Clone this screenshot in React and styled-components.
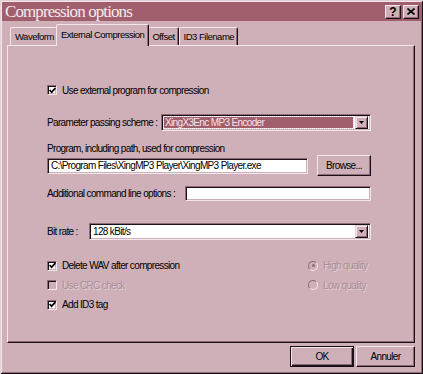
import styled, { createGlobalStyle } from 'styled-components'

const FACE = '#cfb0b9'
const LIGHT = '#f3e7eb'
const SOFT = '#e3d0d6'
const SHADOW = '#8f6a78'
const DARK = '#1c0f15'
const MAUVE = '#a15f6e'

const GlobalStyle = createGlobalStyle`
  html, body { margin: 0; padding: 0; background: ${FACE}; }
  body {
    font-family: 'Liberation Sans', Arial, sans-serif;
    font-size: 10px;
    letter-spacing: -0.65px;
    color: #000;
  }
`

const Window = styled.div`
  width: 423px;
  height: 374px;
  box-sizing: border-box;
  padding: 2px 2px 0;
  background: ${FACE};
  box-shadow: inset 1px 1px ${SOFT}, inset -1px -1px ${DARK}, inset 2px 2px ${LIGHT}, inset -2px -2px ${SHADOW};
  display: flex;
  flex-direction: column;
`

const TitleBar = styled.div`
  height: 19px;
  background: ${MAUVE};
  display: flex;
  align-items: center;
  padding: 0 2px 0 3px;
`

const Title = styled.span`
  flex: 1;
  font-family: 'Liberation Serif', 'Times New Roman', serif;
  font-size: 17px;
  letter-spacing: -0.9px;
  color: #f6e9ed;
  line-height: 19px;
`

const CaptionButton = styled.button`
  width: 16px;
  height: 14px;
  margin-left: ${p => p.$gap || 0}px;
  padding: 0;
  background: ${FACE};
  border: 1px solid;
  border-color: ${LIGHT} ${DARK} ${DARK} ${LIGHT};
  box-shadow: inset -1px -1px ${SHADOW};
  display: flex;
  align-items: center;
  justify-content: center;
  font-family: 'Liberation Sans', Arial, sans-serif;
  font-weight: bold;
  font-size: 12px;
  letter-spacing: 0;
  line-height: 1;
  color: #000;
`

const TabStrip = styled.div`
  height: 21px;
  margin: 3px 0 0 5px;
  padding-left: 3px;
  display: flex;
  align-items: flex-end;
  font-size: 9.5px;
  letter-spacing: -0.5px;
`

const Tab = styled.div`
  position: relative;
  z-index: ${p => (p.$active ? 2 : 1)};
  height: ${p => (p.$active ? 22 : 18)}px;
  margin: 0 ${p => (p.$active ? -2 : 0)}px ${p => (p.$active ? -1 : 0)}px;
  padding: ${p => (p.$active ? '0 4px 2px' : '0 3px 0 4px')};
  box-sizing: border-box;
  background: ${FACE};
  border-top: 1px solid ${LIGHT};
  border-left: 1px solid ${LIGHT};
  border-right: 1px solid ${DARK};
  box-shadow: inset -1px 0 ${SHADOW};
  border-radius: 2px 2px 0 0;
  display: flex;
  align-items: center;
  white-space: nowrap;
`

const Panel = styled.div`
  width: 408px;
  height: 298px;
  margin-left: 5px;
  box-sizing: border-box;
  border: 1px solid;
  border-color: ${LIGHT} ${DARK} ${DARK} ${LIGHT};
  box-shadow: inset -1px -1px ${SHADOW};
  padding-left: 39px;
  display: flex;
  flex-direction: column;
`

const Row = styled.div`
  width: 324px;
  height: ${p => p.$h}px;
  margin-top: ${p => p.$top}px;
  display: flex;
  align-items: center;
  white-space: nowrap;
`

const Label = styled.span`
  width: ${p => (p.$w ? `${p.$w}px` : 'auto')};
  flex-shrink: 0;
`

const Sunken = styled.div`
  width: ${p => p.$w}px;
  height: ${p => p.$h}px;
  box-sizing: border-box;
  background: #fff;
  border: 1px solid;
  border-color: ${SHADOW} ${LIGHT} ${LIGHT} ${SHADOW};
  box-shadow: inset 1px 1px ${DARK}, inset -1px -1px ${FACE};
  padding: 0 3px;
  display: flex;
  align-items: center;
  overflow: hidden;
`

const SelectField = styled(Sunken)`
  padding: 0 2px 0 2px;
`

const Value = styled.span`
  flex: 1;
  height: 11px;
  line-height: 11px;
  padding: 0 1px;
  background: ${p => (p.$selected ? MAUVE : 'transparent')};
  color: ${p => (p.$selected ? '#f6e4ea' : '#000')};
  outline: ${p => (p.$selected ? `1px dotted #e8d0d8` : 'none')};
  margin-right: 2px;
`

const ArrowButton = styled.span`
  width: 13px;
  height: 13px;
  box-sizing: border-box;
  background: ${FACE};
  border: 1px solid;
  border-color: ${SOFT} ${DARK} ${DARK} ${SOFT};
  box-shadow: inset 1px 1px ${LIGHT}, inset -1px -1px ${SHADOW};
  display: flex;
  align-items: center;
  justify-content: center;
`

const PushButton = styled.button`
  width: ${p => p.$w}px;
  height: 21px;
  margin-left: ${p => p.$gap || 0}px;
  padding: 0;
  box-sizing: border-box;
  background: ${FACE};
  border: 1px solid;
  border-color: ${p => (p.$default ? `${DARK}` : `${LIGHT} ${DARK} ${DARK} ${LIGHT}`)};
  box-shadow: ${p =>
    p.$default
      ? `inset 1px 1px ${LIGHT}, inset -1px -1px ${DARK}, inset -2px -2px ${SHADOW}`
      : `inset -1px -1px ${SHADOW}`};
  font-family: inherit;
  font-size: 10px;
  letter-spacing: -0.65px;
  color: #000;
`

const CheckGrid = styled.div`
  margin-top: 16px;
  display: grid;
  grid-template-columns: 261px auto;
  grid-auto-rows: 19.5px;
  align-items: center;
`

const Option = styled.div`
  display: flex;
  align-items: center;
  gap: 5px;
  white-space: nowrap;
  color: ${p => (p.$disabled ? '#a98d98' : '#000')};
  text-shadow: ${p => (p.$disabled ? `1px 1px 0 ${SOFT}` : 'none')};
`

const Box = styled.span`
  width: 10px;
  height: 10px;
  box-sizing: border-box;
  flex-shrink: 0;
  background: ${p => (p.$disabled ? FACE : '#fff')};
  border: 1px solid;
  border-color: ${SHADOW} ${LIGHT} ${LIGHT} ${SHADOW};
  box-shadow: inset 1px 1px ${DARK}, inset -1px -1px ${FACE};
  display: flex;
  align-items: center;
  justify-content: center;
`

const Radio = styled.span`
  width: 10px;
  height: 10px;
  box-sizing: border-box;
  flex-shrink: 0;
  border-radius: 50%;
  border: 1px solid;
  border-color: ${SHADOW} ${LIGHT} ${LIGHT} ${SHADOW};
  background: ${FACE};
  display: flex;
  align-items: center;
  justify-content: center;
`

const Dot = styled.span`
  width: 3px;
  height: 3px;
  border-radius: 50%;
  background: ${SHADOW};
`

const Footer = styled.div`
  width: 408px;
  margin: 3px 0 0 5px;
  display: flex;
  justify-content: flex-end;
`

const Tick = () => (
  <svg width="7" height="7" viewBox="0 0 7 7">
    <polyline points="0.6,3 2.6,5.2 6.4,1.2" fill="none" stroke="#000" strokeWidth="1.7" />
  </svg>
)

const Arrow = () => (
  <svg width="5" height="3" viewBox="0 0 5 3">
    <polygon points="0,0 5,0 2.5,3" fill="#000" />
  </svg>
)

const CloseGlyph = () => (
  <svg width="8" height="7" viewBox="0 0 8 7">
    <path d="M0.5 0.5 L7.5 6.5 M7.5 0.5 L0.5 6.5" stroke="#000" strokeWidth="1.6" />
  </svg>
)

function Check({ label, checked, disabled }) {
  return (
    <Option $disabled={disabled}>
      <Box $disabled={disabled}>{checked && <Tick />}</Box>
      {label}
    </Option>
  )
}

function RadioOption({ label, selected }) {
  return (
    <Option $disabled>
      <Radio>{selected && <Dot />}</Radio>
      {label}
    </Option>
  )
}

function Select({ w, value, selected }) {
  return (
    <SelectField $w={w} $h={17}>
      <Value $selected={selected}>{value}</Value>
      <ArrowButton>
        <Arrow />
      </ArrowButton>
    </SelectField>
  )
}

export default function App() {
  return (
    <>
      <GlobalStyle />
      <Window>
        <TitleBar>
          <Title>Compression options</Title>
          <CaptionButton>?</CaptionButton>
          <CaptionButton $gap={2}>
            <CloseGlyph />
          </CaptionButton>
        </TitleBar>

        <TabStrip>
          <Tab>Waveform</Tab>
          <Tab $active>External Compression</Tab>
          <Tab>Offset</Tab>
          <Tab>ID3 Filename</Tab>
        </TabStrip>

        <Panel>
          <Row $h={14} $top={37}>
            <Check label="Use external program for compression" checked />
          </Row>

          <Row $h={17} $top={17}>
            <Label $w={114}>Parameter passing scheme :</Label>
            <Select w={210} value="XingX3Enc MP3 Encoder" selected />
          </Row>

          <Row $h={14} $top={10}>
            <Label>Program, including path, used for compression</Label>
          </Row>

          <Row $h={21} $top={0}>
            <Sunken $w={261} $h={16}>C:\Program Files\XingMP3 Player\XingMP3 Player.exe</Sunken>
            <PushButton $w={54} $gap={9}>Browse...</PushButton>
          </Row>

          <Row $h={16} $top={9}>
            <Label $w={138}>Additional command line options :</Label>
            <Sunken $w={186} $h={15} />
          </Row>

          <Row $h={17} $top={22}>
            <Label $w={42}>Bit rate :</Label>
            <Select w={282} value="128 kBit/s" />
          </Row>

          <CheckGrid>
            <Check label="Delete WAV after compression" checked />
            <RadioOption label="High quality" selected />
            <Check label="Use CRC check" disabled />
            <RadioOption label="Low quality" />
            <Check label="Add ID3 tag" checked />
          </CheckGrid>
        </Panel>

        <Footer>
          <PushButton $w={64} $default>OK</PushButton>
          <PushButton $w={59} $gap={2}>Annuler</PushButton>
        </Footer>
      </Window>
    </>
  )
}
